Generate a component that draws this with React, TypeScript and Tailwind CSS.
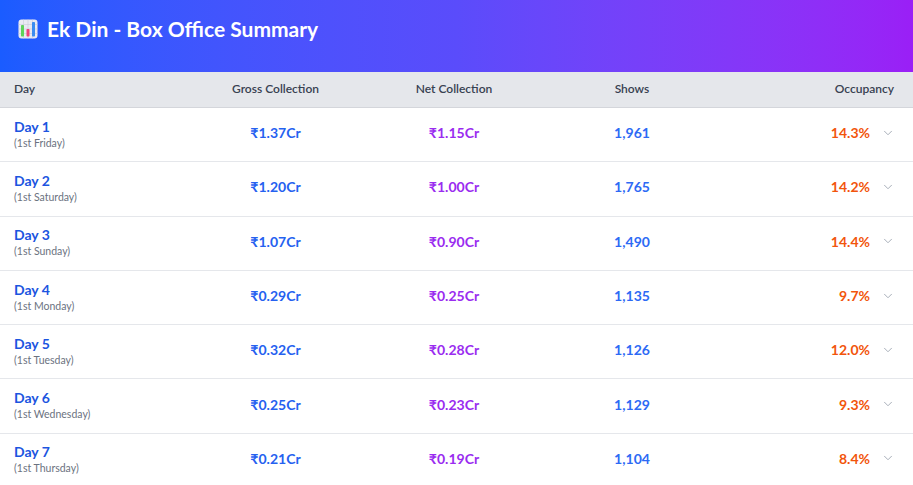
import { ChevronDown } from 'lucide-react';

interface DayRow {
  day: string;
  label: string;
  gross: string;
  net: string;
  shows: string;
  occupancy: string;
}

const rows: DayRow[] = [
  { day: 'Day 1', label: '(1st Friday)', gross: '₹1.37Cr', net: '₹1.15Cr', shows: '1,961', occupancy: '14.3%' },
  { day: 'Day 2', label: '(1st Saturday)', gross: '₹1.20Cr', net: '₹1.00Cr', shows: '1,765', occupancy: '14.2%' },
  { day: 'Day 3', label: '(1st Sunday)', gross: '₹1.07Cr', net: '₹0.90Cr', shows: '1,490', occupancy: '14.4%' },
  { day: 'Day 4', label: '(1st Monday)', gross: '₹0.29Cr', net: '₹0.25Cr', shows: '1,135', occupancy: '9.7%' },
  { day: 'Day 5', label: '(1st Tuesday)', gross: '₹0.32Cr', net: '₹0.28Cr', shows: '1,126', occupancy: '12.0%' },
  { day: 'Day 6', label: '(1st Wednesday)', gross: '₹0.25Cr', net: '₹0.23Cr', shows: '1,129', occupancy: '9.3%' },
  { day: 'Day 7', label: '(1st Thursday)', gross: '₹0.21Cr', net: '₹0.19Cr', shows: '1,104', occupancy: '8.4%' },
];

function ChartIcon() {
  return (
    <svg width="20" height="20" viewBox="0 0 20 20" className="shrink-0">
      <rect x="0.5" y="0.5" width="19" height="19" rx="3" fill="#e9eaf2" />
      <path d="M0.5 5.5h19M0.5 10h19M0.5 14.5h19M5.5 0.5v19M10 0.5v19M14.5 0.5v19" stroke="#c9cbd8" strokeWidth="0.6" />
      <rect x="3" y="6" width="3" height="11.5" rx="0.8" fill="#5fd35a" />
      <rect x="8.5" y="10" width="3" height="7.5" rx="0.8" fill="#f0407a" />
      <rect x="14" y="3" width="3" height="14.5" rx="0.8" fill="#3b8df0" />
    </svg>
  );
}

const cols = 'grid grid-cols-[186px_179px_178px_178px_1fr] items-center';

export default function App() {
  return (
    <div className="w-[913px] h-[485px] overflow-hidden bg-white font-['Lato','Noto_Sans',sans-serif]">
      <div className="h-[72px] bg-gradient-to-r from-[#1a5cff] via-[#5a4cfb] to-[#9a1ff6] flex items-center pl-[18px] gap-[9px] pb-[15px]">
        <ChartIcon />
        <h1 className="text-white text-[21px] font-bold">Ek Din - Box Office Summary</h1>
      </div>

      <div className={`${cols} h-[36px] bg-[#e5e7eb] border-b border-[#d4d6db] text-[12px] font-semibold text-[#374151] pb-[2px]`}>
        <div className="pl-[14px]">Day</div>
        <div className="text-center">Gross Collection</div>
        <div className="text-center">Net Collection</div>
        <div className="text-center">Shows</div>
        <div className="text-right pr-[19px]">Occupancy</div>
      </div>

      {rows.map((r) => (
        <div key={r.day} className={`${cols} h-[54.3px] border-b border-[#e5e7eb]`}>
          <div className="pl-[14px] pb-[3px]">
            <div className="text-[14px] font-bold text-[#1c55e0] leading-[18px]">{r.day}</div>
            <div className="text-[10.5px] text-[#6b7280] leading-[12px] mt-[1px]">{r.label}</div>
          </div>
          <div className="text-center text-[14px] font-bold text-[#2561f0] pb-[4px]">{r.gross}</div>
          <div className="text-center text-[14px] font-bold text-[#9a2cf0] pb-[4px]">{r.net}</div>
          <div className="text-center text-[14px] font-bold text-[#2d6af5] pb-[4px]">{r.shows}</div>
          <div className="flex items-center justify-end pr-[18px] gap-[11px] pb-[4px]">
            <span className="text-[14px] font-bold text-[#f2550c]">{r.occupancy}</span>
            <ChevronDown size={14} strokeWidth={1.5} className="text-[#9ca3af]" />
          </div>
        </div>
      ))}
    </div>
  );
}
